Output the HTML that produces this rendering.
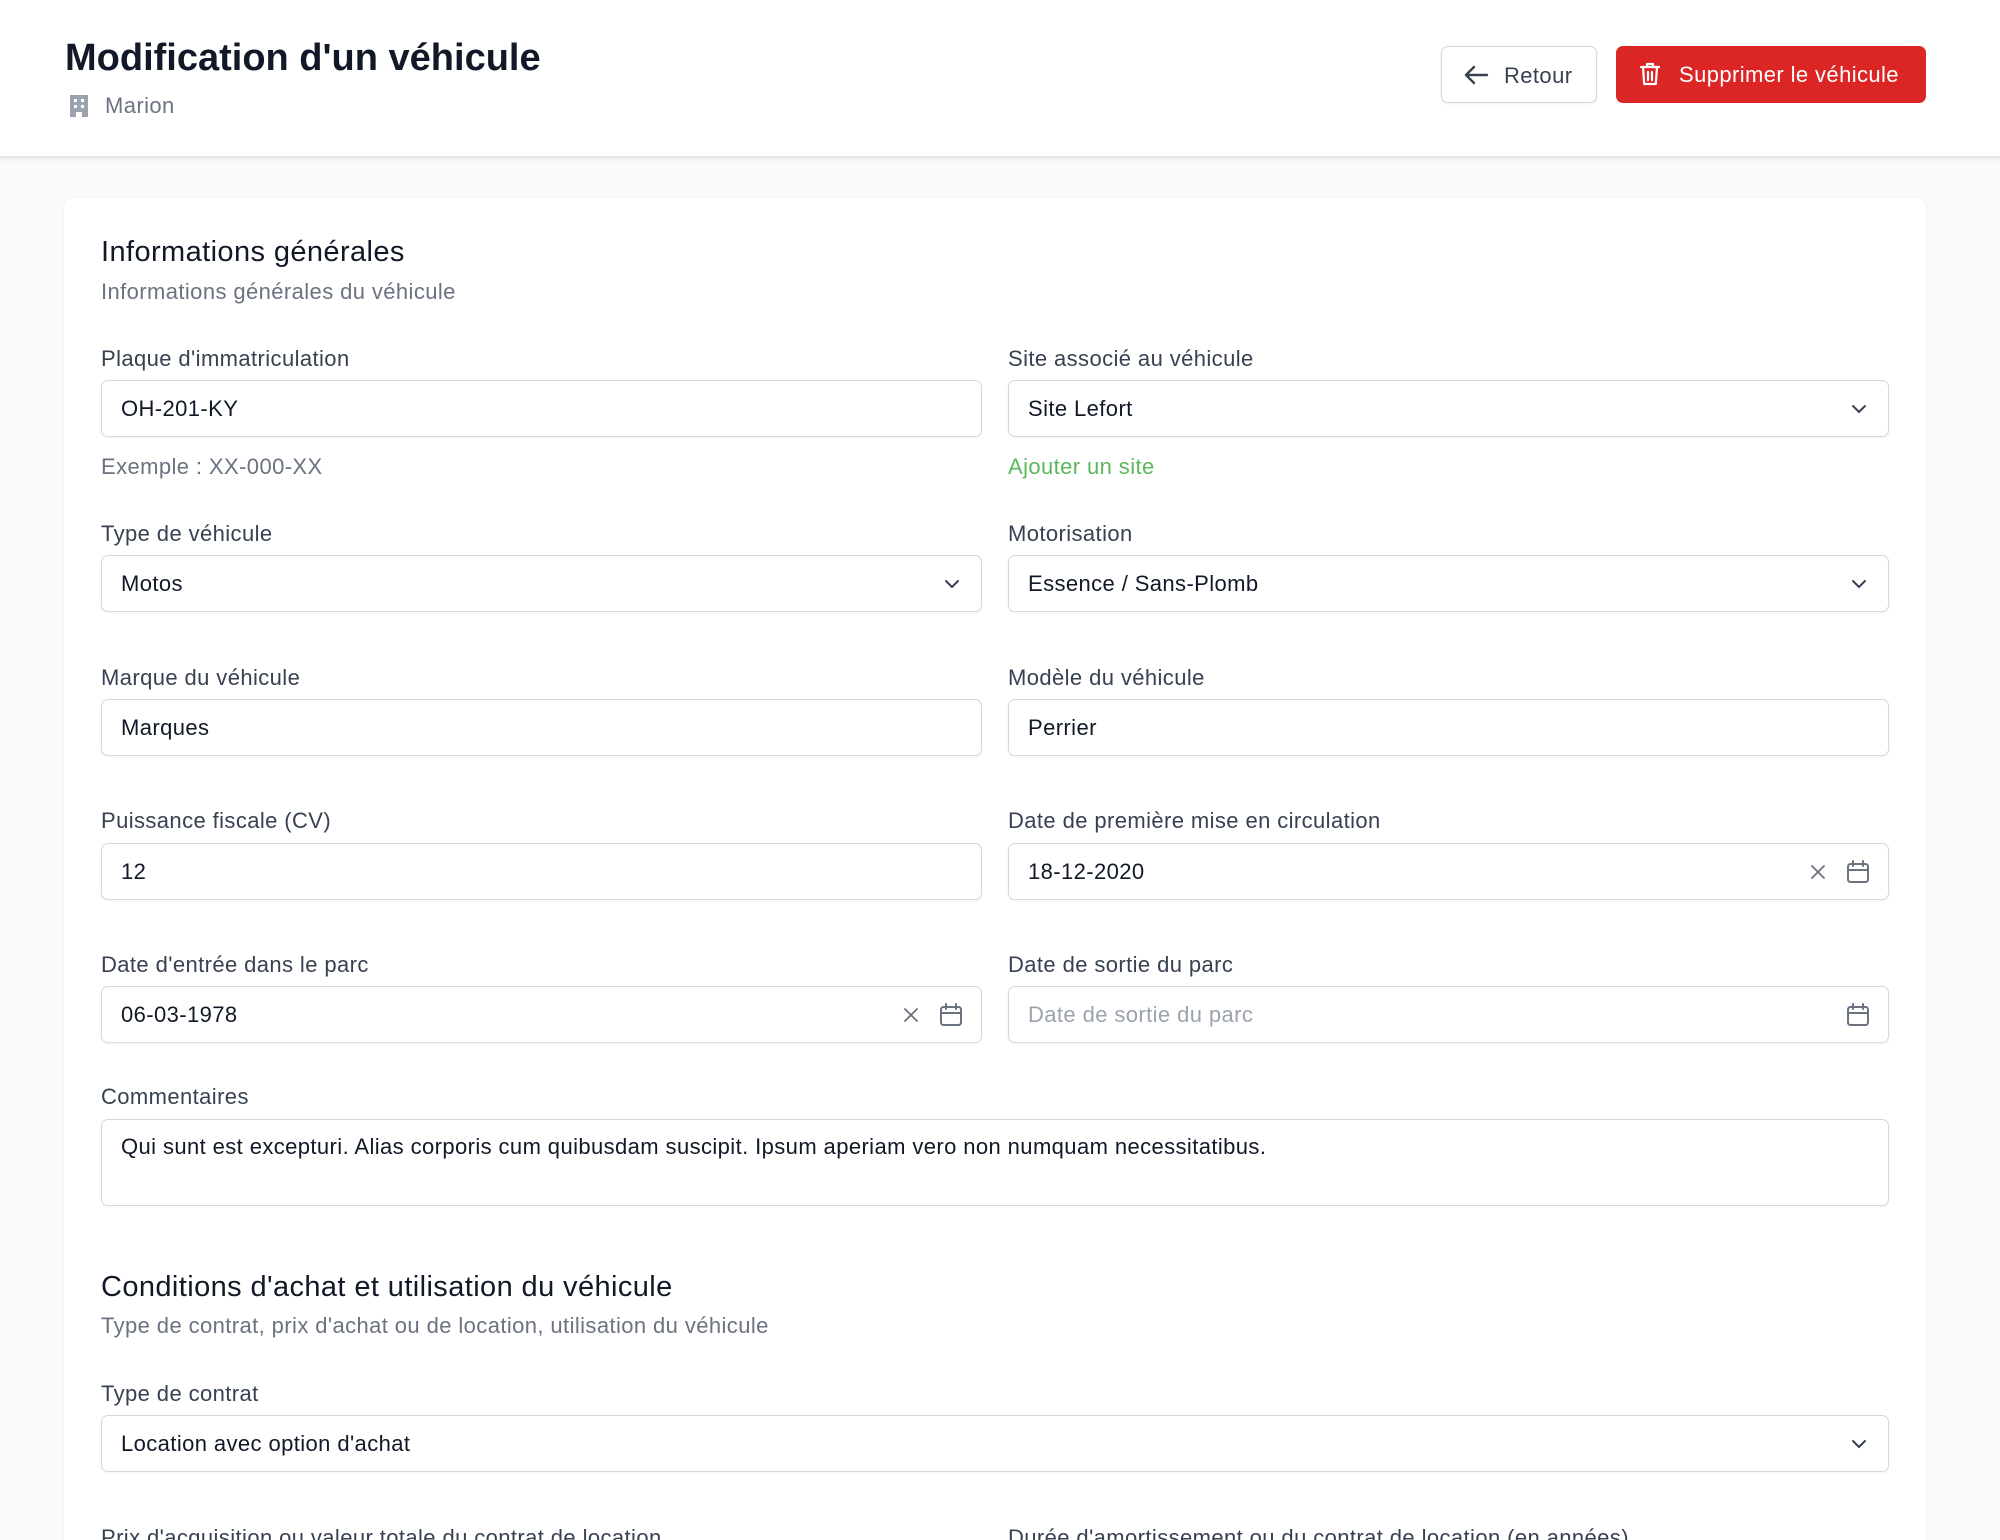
<!DOCTYPE html>
<html><head><meta charset="utf-8">
<style>
*{box-sizing:border-box;margin:0;padding:0}
html{width:2000px;height:1540px;overflow:hidden}
body{width:2000px;height:1540px;overflow:hidden;background:#f9fafb;font-family:"Liberation Sans",sans-serif;position:relative;color:#111827}
.a{position:absolute;white-space:nowrap}
header{position:absolute;left:0;top:0;width:2000px;height:158px;background:#fff;border-bottom:2px solid #e5e7eb;box-shadow:0 2px 4px rgba(0,0,0,.05)}
.card{position:absolute;left:64px;top:198px;width:1862px;height:1342px;background:#fff;border-radius:10px 10px 0 0;box-shadow:0 1px 3px rgba(0,0,0,.06)}
.lbl{position:absolute;font-size:22px;letter-spacing:.4px;color:#374151;line-height:24px;white-space:nowrap}
.inp{position:absolute;height:57px;border:1.5px solid #d5d9df;border-radius:7px;background:#fff;box-shadow:0 1px 2px rgba(0,0,0,.06);font-size:22px;letter-spacing:.4px;line-height:56px;padding-left:19px;color:#111827;white-space:nowrap}
.L{left:101px;width:881px}.R{left:1008px;width:881px}
.ph{color:#9ca3af}
.chev{position:absolute;right:20px;top:19px}
.ic{position:absolute;top:15px}
.h2{font-size:29px;letter-spacing:.4px;color:#111827}
.sub{font-size:22px;letter-spacing:.4px;color:#6b7280}
</style></head><body>
<header>
<div class="a" style="left:65px;top:36px;font-size:38px;font-weight:bold;color:#111827;line-height:44px">Modification d'un véhicule</div>
<svg class="a" style="left:68px;top:94px" width="22" height="24" viewBox="0 0 22 24"><path d="M2 1h18v22h-6v-5h-6v5H2z" fill="#9ca3af"/><rect x="6" y="5" width="3" height="3" fill="#fff"/><rect x="13" y="5" width="3" height="3" fill="#fff"/><rect x="6" y="11" width="3" height="3" fill="#fff"/><rect x="13" y="11" width="3" height="3" fill="#fff"/></svg>
<div class="a" style="left:105px;top:93px;font-size:22px;letter-spacing:.4px;color:#6b7280;line-height:26px">Marion</div>
<div class="a" style="left:1441px;top:46px;width:156px;height:57px;border:1.5px solid #d1d5db;border-radius:7px;background:#fff;box-shadow:0 1px 2px rgba(0,0,0,.06)">
<svg class="a" style="left:21px;top:17px" width="26" height="22" viewBox="0 0 26 22"><path d="M24 11H3M11 3l-8 8 8 8" fill="none" stroke="#374151" stroke-width="2.4" stroke-linecap="round" stroke-linejoin="round"/></svg>
<div class="a" style="left:62px;top:16px;font-size:22px;letter-spacing:.4px;color:#374151;line-height:26px">Retour</div></div>
<div class="a" style="left:1616px;top:46px;width:310px;height:57px;border-radius:7px;background:#dc2626">
<svg class="a" style="left:22px;top:15px" width="24" height="26" viewBox="0 0 24 26"><path d="M3 6h18M9 6V3h6v3M5 6l1.2 17h11.6L19 6M10 11v8M14 11v8" fill="none" stroke="#fff" stroke-width="2.2" stroke-linecap="round" stroke-linejoin="round"/></svg>
<div class="a" style="left:63px;top:16px;font-size:22px;letter-spacing:.4px;color:#fff;line-height:26px">Supprimer le véhicule</div></div>
</header>
<div class="card"></div>

<div class="a h2" style="left:101px;top:235px;line-height:34px">Informations générales</div>
<div class="a sub" style="left:101px;top:280px;line-height:24px">Informations générales du véhicule</div>

<div class="lbl" style="left:101px;top:347px">Plaque d'immatriculation</div>
<div class="inp L" style="top:380px">OH-201-KY</div>
<div class="a sub" style="left:101px;top:455px;line-height:24px">Exemple : XX-000-XX</div>
<div class="lbl" style="left:1008px;top:347px">Site associé au véhicule</div>
<div class="inp R" style="top:380px">Site Lefort<svg class="chev" width="18" height="18" viewBox="0 0 18 18"><path d="M3 6l6 6 6-6" fill="none" stroke="#374151" stroke-width="2" stroke-linecap="round"/></svg></div>
<div class="a" style="left:1008px;top:455px;font-size:22px;letter-spacing:.4px;color:#5cb85c;line-height:24px">Ajouter un site</div>

<div class="lbl" style="left:101px;top:522px">Type de véhicule</div>
<div class="inp L" style="top:555px">Motos<svg class="chev" width="18" height="18" viewBox="0 0 18 18"><path d="M3 6l6 6 6-6" fill="none" stroke="#374151" stroke-width="2" stroke-linecap="round"/></svg></div>
<div class="lbl" style="left:1008px;top:522px">Motorisation</div>
<div class="inp R" style="top:555px">Essence / Sans-Plomb<svg class="chev" width="18" height="18" viewBox="0 0 18 18"><path d="M3 6l6 6 6-6" fill="none" stroke="#374151" stroke-width="2" stroke-linecap="round"/></svg></div>

<div class="lbl" style="left:101px;top:666px">Marque du véhicule</div>
<div class="inp L" style="top:699px">Marques</div>
<div class="lbl" style="left:1008px;top:666px">Modèle du véhicule</div>
<div class="inp R" style="top:699px">Perrier</div>

<div class="lbl" style="left:101px;top:809px">Puissance fiscale (CV)</div>
<div class="inp L" style="top:843px">12</div>
<div class="lbl" style="left:1008px;top:809px">Date de première mise en circulation</div>
<div class="inp R" style="top:843px">18-12-2020
<svg class="ic" style="right:60px;top:18px" width="20" height="20" viewBox="0 0 20 20"><path d="M4 4l12 12M16 4L4 16" stroke="#6b7280" stroke-width="1.8" stroke-linecap="round"/></svg>
<svg class="ic" style="right:17px" width="26" height="26" viewBox="0 0 26 26"><rect x="3" y="5" width="20" height="18" rx="2.5" fill="none" stroke="#6b7280" stroke-width="2"/><path d="M3 11h20M8 2v5M18 2v5" stroke="#6b7280" stroke-width="2" stroke-linecap="round"/></svg></div>

<div class="lbl" style="left:101px;top:953px">Date d'entrée dans le parc</div>
<div class="inp L" style="top:986px">06-03-1978
<svg class="ic" style="right:60px;top:18px" width="20" height="20" viewBox="0 0 20 20"><path d="M4 4l12 12M16 4L4 16" stroke="#6b7280" stroke-width="1.8" stroke-linecap="round"/></svg>
<svg class="ic" style="right:17px" width="26" height="26" viewBox="0 0 26 26"><rect x="3" y="5" width="20" height="18" rx="2.5" fill="none" stroke="#6b7280" stroke-width="2"/><path d="M3 11h20M8 2v5M18 2v5" stroke="#6b7280" stroke-width="2" stroke-linecap="round"/></svg></div>
<div class="lbl" style="left:1008px;top:953px">Date de sortie du parc</div>
<div class="inp R ph" style="top:986px">Date de sortie du parc
<svg class="ic" style="right:17px" width="26" height="26" viewBox="0 0 26 26"><rect x="3" y="5" width="20" height="18" rx="2.5" fill="none" stroke="#6b7280" stroke-width="2"/><path d="M3 11h20M8 2v5M18 2v5" stroke="#6b7280" stroke-width="2" stroke-linecap="round"/></svg></div>

<div class="lbl" style="left:101px;top:1085px">Commentaires</div>
<div class="inp" style="left:101px;width:1788px;top:1119px;height:87px;line-height:26px;padding-top:14px">Qui sunt est excepturi. Alias corporis cum quibusdam suscipit. Ipsum aperiam vero non numquam necessitatibus.</div>

<div class="a h2" style="left:101px;top:1270px;line-height:34px">Conditions d'achat et utilisation du véhicule</div>
<div class="a sub" style="left:101px;top:1314px;line-height:24px">Type de contrat, prix d'achat ou de location, utilisation du véhicule</div>

<div class="lbl" style="left:101px;top:1382px">Type de contrat</div>
<div class="inp" style="left:101px;width:1788px;top:1415px">Location avec option d'achat<svg class="chev" width="18" height="18" viewBox="0 0 18 18"><path d="M3 6l6 6 6-6" fill="none" stroke="#374151" stroke-width="2" stroke-linecap="round"/></svg></div>

<div class="lbl" style="left:101px;top:1526px">Prix d'acquisition ou valeur totale du contrat de location</div>
<div class="lbl" style="left:1008px;top:1526px">Durée d'amortissement ou du contrat de location (en années)</div>
</body></html>
